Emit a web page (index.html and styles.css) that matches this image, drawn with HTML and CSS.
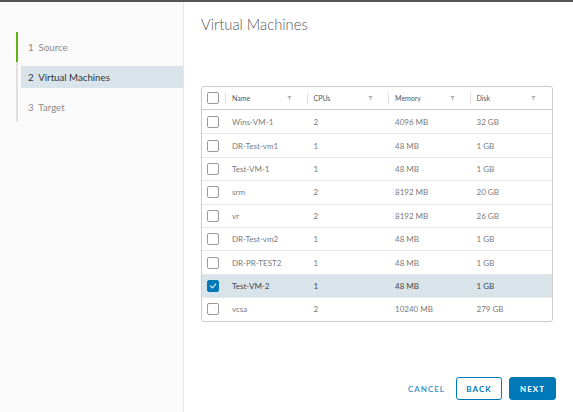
FILE: index.html
```html
<!DOCTYPE html>
<html lang="en">
<head>
    <meta charset="UTF-8">
    <meta name="viewport" content="width=device-width, initial-scale=1.0">
    <title>Virtual Machines</title>
    <link rel="stylesheet" href="styles.css">
</head>

<body>
    <!-- 左侧步骤 -->
    <div class="sidebar">
        <div class="steps">
            <div class="step done"><div class="label">1&nbsp; Source</div></div>
            <div class="step active"><div class="label">2&nbsp; Virtual Machines</div></div>
            <div class="step"><div class="label">3&nbsp; Target</div></div>
        </div>
    </div>

    <!-- 右侧内容 -->
    <div class="main">
        <h1 class="title">Virtual Machines</h1>

        <div class="grid">
            <div class="row head">
                <div class="cell check"><span class="box"></span></div>
                <div class="cell">Name <svg class="filter" viewBox="0 0 6 5"><polygon points="0,0 6,0 3.6,2.6 3.6,5 2.4,5 2.4,2.6"/></svg></div>
                <div class="cell">CPUs <svg class="filter" viewBox="0 0 6 5"><polygon points="0,0 6,0 3.6,2.6 3.6,5 2.4,5 2.4,2.6"/></svg></div>
                <div class="cell">Memory <svg class="filter" viewBox="0 0 6 5"><polygon points="0,0 6,0 3.6,2.6 3.6,5 2.4,5 2.4,2.6"/></svg></div>
                <div class="cell last">Disk <svg class="filter" viewBox="0 0 6 5"><polygon points="0,0 6,0 3.6,2.6 3.6,5 2.4,5 2.4,2.6"/></svg></div>
            </div>
            <div id="rows"></div>
        </div>

        <div class="footer">
            <button class="btn flat">CANCEL</button>
            <button class="btn outline">BACK</button>
            <button class="btn primary">NEXT</button>
        </div>
    </div>

    <script>
        const vms = [
            ["Wins-VM-1", 2, "4096 MB", "32 GB"],
            ["DR-Test-vm1", 1, "48 MB", "1 GB"],
            ["Test-VM-1", 1, "48 MB", "1 GB"],
            ["srm", 2, "8192 MB", "20 GB"],
            ["vr", 2, "8192 MB", "26 GB"],
            ["DR-Test-vm2", 1, "48 MB", "1 GB"],
            ["DR-PR-TEST2", 1, "48 MB", "1 GB"],
            ["Test-VM-2", 1, "48 MB", "1 GB"],
            ["vcsa", 2, "10240 MB", "279 GB"]
        ];
        const selected = "Test-VM-2";

        let rows = document.getElementById("rows");
        vms.forEach(vm => {
            let row = document.createElement("div");
            row.classList.add("row");
            if (vm[0] === selected) row.classList.add("selected");
            row.innerHTML = `
                <div class="cell check"><span class="box"></span></div>
                <div class="cell">${vm[0]}</div>
                <div class="cell">${vm[1]}</div>
                <div class="cell">${vm[2]}</div>
                <div class="cell">${vm[3]}</div>
            `;
            rows.appendChild(row);
        });
    </script>
</body>
</html>
```

FILE: styles.css
```css
* {
    margin: 0;
    padding: 0;
    box-sizing: border-box;
}

body {
    font-family: Lato, "Open Sans", sans-serif;
    display: flex;
    height: 100vh;
    overflow: hidden;
    border-top: 2px solid #555;
    background: #fff;
    color: #565656;
}

/* 左侧步骤 */
.sidebar {
    width: 184px;
    background: #fafafa;
    border-right: 1px solid #e6e6e6;
    padding-top: 30px;
}

.steps {
    margin-left: 16px;
}

.step {
    border-left: 2px solid #e0e0e0;
    padding: 4px 0 4px 3px;
}

.step.done {
    border-left-color: #60b515;
}

.step .label {
    height: 22px;
    line-height: 22px;
    padding-left: 7px;
    font-size: 9.7px;
    color: #8a8a8a;
}

.step.active .label {
    background: #d9e4ea;
    color: #333;
}

/* 右侧内容 */
.main {
    flex: 1;
    display: flex;
    flex-direction: column;
    padding: 12px 20px 12px 17px;
}

.title {
    font-size: 14.8px;
    font-weight: 300;
    line-height: 20px;
    color: #565656;
    margin-bottom: 52px;
}

/* 表格 */
.grid {
    border: 1px solid #ccc;
    border-radius: 3px;
}

.row {
    display: grid;
    grid-template-columns: 24px repeat(4, 1fr);
    height: 23.4px;
    border-top: 1px solid #e8e8e8;
    font-size: 8px;
    color: #7a7a7a;
}

.row.head {
    height: 23px;
    border-top: none;
    border-bottom: 1px solid #ccc;
    font-size: 7px;
    color: #565656;
}

#rows .row:first-child {
    border-top: none;
}

.row.selected {
    background: #d9e4ea;
    color: #444;
}

.cell {
    display: flex;
    align-items: center;
    padding-left: 6px;
    position: relative;
}

.row.head .cell {
    padding-right: 16px;
}

.row.head .cell::after {
    content: "";
    position: absolute;
    right: 0;
    top: 6px;
    height: 11px;
    border-right: 1px solid #e0e0e0;
}

.row.head .cell.last::after {
    display: none;
}

.filter {
    width: 5px;
    height: 4px;
    fill: #b0b0b0;
    margin-left: auto;
}

.cell.check,
.row.head .cell.check {
    padding: 0 0 0 5px;
}

.box {
    flex-shrink: 0;
    width: 12px;
    height: 12px;
    border: 1px solid #9a9a9a;
    border-radius: 2px;
    background: #fff;
}

.row.selected .box {
    background: #0079b8;
    border-color: #0079b8;
    position: relative;
}

.row.selected .box::after {
    content: "";
    position: absolute;
    left: 3px;
    top: 1px;
    width: 3px;
    height: 5px;
    border: solid #fff;
    border-width: 0 1.5px 1.5px 0;
    transform: rotate(40deg);
}

/* 底部按钮 */
.footer {
    margin-top: auto;
    display: flex;
    justify-content: flex-end;
    align-items: center;
    margin-right: -3px;
}

.btn {
    font-family: Lato, "Open Sans", sans-serif;
    font-size: 8px;
    font-weight: bold;
    letter-spacing: 1px;
    height: 23px;
    border-radius: 3px;
    cursor: pointer;
    background: none;
    border: 1px solid transparent;
    color: #0079b8;
}

.btn.flat {
    font-weight: 600;
    color: #3b8fc4;
    padding: 0 4px;
    margin-right: 6px;
}

.btn.outline {
    width: 46px;
    border-color: #0079b8;
    margin-right: 7px;
}

.btn.primary {
    width: 47px;
    background: #0079b8;
    border-color: #0079b8;
    color: #fff;
}
```
